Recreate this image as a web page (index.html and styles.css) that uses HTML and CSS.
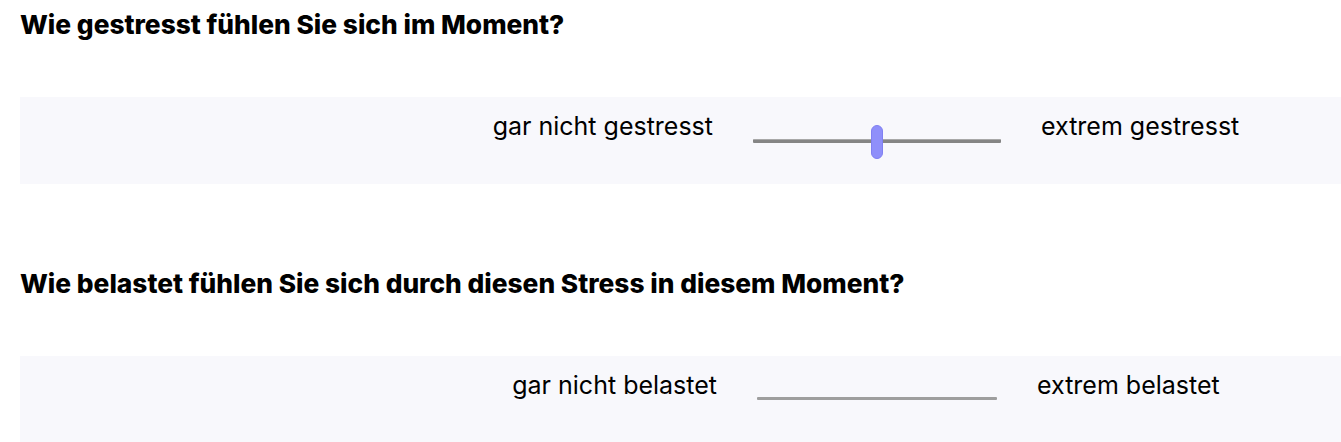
FILE: index.html
```html
<!DOCTYPE html>
<html lang="de">
<head>
<meta charset="utf-8">
<link rel="stylesheet" href="styles.css">
</head>
<body>
<main class="survey">
  <section class="question">
    <h2 class="q-title">Wie gestresst fühlen Sie sich im Moment?</h2>
    <div class="scale-row">
      <span class="lbl lbl-left lbl-left-1">gar nicht gestresst</span>
      <div class="slider slider-1">
        <div class="track track-active"></div>
        <div class="thumb" style="left: 50%"></div>
      </div>
      <span class="lbl lbl-right">extrem gestresst</span>
    </div>
  </section>
  <section class="question question-2">
    <h2 class="q-title">Wie belastet fühlen Sie sich durch diesen Stress in diesem Moment?</h2>
    <div class="scale-row">
      <span class="lbl lbl-left lbl-left-2">gar nicht belastet</span>
      <div class="slider slider-2">
        <div class="track track-empty"></div>
      </div>
      <span class="lbl lbl-right">extrem belastet</span>
    </div>
  </section>
</main>
</body>
</html>
```
FILE: styles.css
```css
html, body {
  margin: 0;
  padding: 0;
  background: #ffffff;
}
body {
  font-family: Inter, "Noto Sans", sans-serif;
  color: #000;
  overflow: hidden;
}
.survey {
  padding-left: 20px;
}
.q-title {
  margin: 9px 0 56px 0;
  font-size: 26.3px;
  font-weight: 800;
  line-height: 32px;
  color: #000;
}
.question-2 .q-title {
  margin-top: 84px;
  margin-bottom: 56px;
}
.scale-row {
  display: flex;
  align-items: flex-start;
  height: 87px;
  background: #f8f8fc;
  box-sizing: border-box;
  padding-top: 14px;
}
.lbl {
  font-size: 25px;
  line-height: 30px;
  font-weight: 400;
  white-space: nowrap;
}
.lbl-left {
  text-align: right;
  flex: none;
}
.lbl-left-1 { width: 693px; }
.lbl-left-2 { width: 697px; }
.slider {
  position: relative;
  flex: none;
  margin: 0 40px;
}
.slider-1 { width: 248px; height: 48px; }
.slider-2 { width: 240px; height: 48px; }
.track {
  position: absolute;
  left: 0;
  right: 0;
  border-radius: 1px;
}
.track-active {
  top: 28px;
  height: 4px;
  background: #858585;
  border-top: 1px solid #a8a8a8;
  box-sizing: border-box;
}
.track-empty {
  top: 27px;
  height: 3px;
  background: #9e9e9e;
}
.thumb {
  position: absolute;
  top: 14px;
  width: 12px;
  height: 34px;
  margin-left: -6px;
  border-radius: 6px;
  background: #8f8ffa;
  border: 1px solid #8080f2;
  box-sizing: border-box;
}
```
